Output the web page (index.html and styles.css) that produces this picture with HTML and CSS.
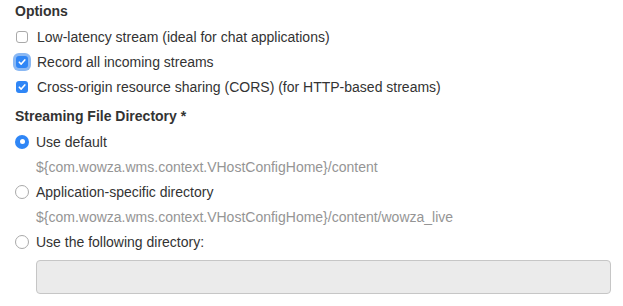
FILE: index.html
```html
<!DOCTYPE html>
<html>
<head>
<meta charset="utf-8">
<link rel="stylesheet" href="styles.css">
</head>
<body>
<div class="panel">
  <h3 class="heading">Options</h3>
  <div class="group first">
    <label class="row"><span class="box"></span><span>Low-latency stream (ideal for chat applications)</span></label>
    <label class="row"><span class="box checked focus"><svg viewBox="0 0 12 12" width="12" height="12"><path d="M3.3 6.2 L5.2 8.1 L8.8 3.9" fill="none" stroke="#fff" stroke-width="1.6" stroke-linecap="round" stroke-linejoin="round"/></svg></span><span>Record all incoming streams</span></label>
    <label class="row"><span class="box checked"><svg viewBox="0 0 12 12" width="12" height="12"><path d="M3.3 6.2 L5.2 8.1 L8.8 3.9" fill="none" stroke="#fff" stroke-width="1.6" stroke-linecap="round" stroke-linejoin="round"/></svg></span><span>Cross-origin resource sharing (CORS) (for HTTP-based streams)</span></label>
  </div>
  <h3 class="heading second">Streaming File Directory *</h3>
  <div class="group radios">
    <label class="row"><span class="radio on"></span><span>Use default</span></label>
    <div class="row sub">${com.wowza.wms.context.VHostConfigHome}/content</div>
    <label class="row"><span class="radio"></span><span>Application-specific directory</span></label>
    <div class="row sub">${com.wowza.wms.context.VHostConfigHome}/content/wowza_live</div>
    <label class="row"><span class="radio"></span><span>Use the following directory:</span></label>
    <div class="field"></div>
  </div>
</div>
</body>
</html>
```

FILE: styles.css
```css
html, body {
  margin: 0;
  padding: 0;
  background: #fff;
}
.panel {
  padding: 0 13px 0 15px;
  font-family: "Liberation Sans", Arial, sans-serif;
  color: #333;
  font-size: 14px;
}
.heading {
  margin: 0;
  font-size: 14px;
  font-weight: bold;
  line-height: 22px;
  color: #333;
}
.heading.second {
  margin-top: 6px;
}
.group.first {
  padding-top: 2px;
}
.group.radios {
  padding-top: 2px;
}
.row {
  display: flex;
  align-items: center;
  height: 25px;
}
.row.sub {
  padding-left: 21px;
  color: #959595;
}
.box {
  width: 12px;
  height: 12px;
  box-sizing: border-box;
  border: 1px solid #a9a9a9;
  border-radius: 3px;
  margin: 0 9px 0 1px;
  display: flex;
  background: #fff;
}
.box.checked {
  border: none;
  background: #2f86f6;
}
.box.focus {
  box-shadow: 0 0 0 3px #8ab8f3;
}
.radio {
  width: 14px;
  height: 14px;
  box-sizing: border-box;
  border: 1px solid #a9a9a9;
  border-radius: 50%;
  margin-right: 7px;
  background: #fff;
  display: flex;
  align-items: center;
  justify-content: center;
}
.radio.on {
  border: none;
  background: #2f86f6;
}
.radio.on::after {
  content: "";
  width: 5px;
  height: 5px;
  border-radius: 50%;
  background: #fff;
}
.field {
  margin: 6px 0 0 21px;
  height: 34px;
  box-sizing: border-box;
  width: 575px;
  border: 1px solid #c6c6c6;
  border-radius: 4px;
  background: #ebebeb;
}
```
